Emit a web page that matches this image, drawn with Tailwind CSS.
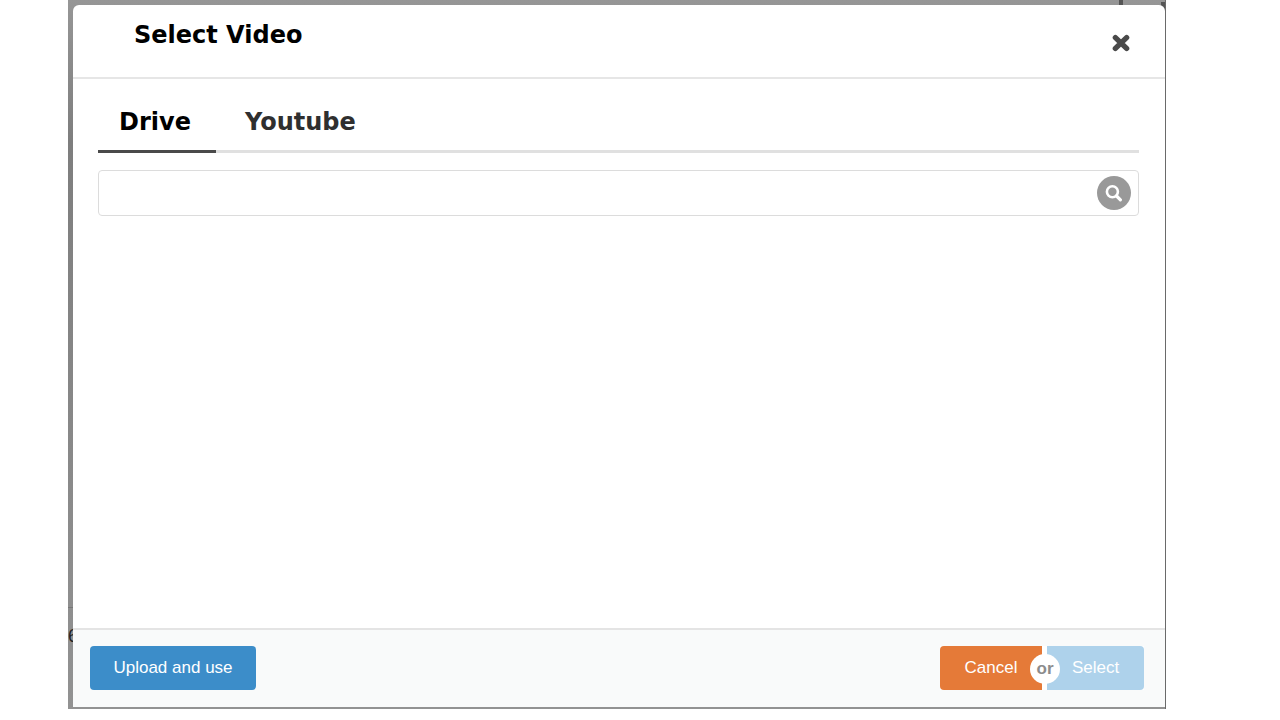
<!DOCTYPE html>
<html lang="en">
<head>
<meta charset="utf-8">
<meta name="viewport" content="width=device-width, initial-scale=1">
<title>Select Video</title>
<script src="https://cdn.jsdelivr.net/npm/@tailwindcss/browser@4"></script>
</head>
<body class="bg-white font-['Liberation_Sans',Arial,sans-serif]">
<div class="flex h-screen flex-col pr-[114px] pb-[11px] pl-[68px]">
  <!-- Dimmed page behind the dialog -->
  <div class="relative flex flex-1 flex-col overflow-hidden border-r border-[#6a6a6a] bg-linear-to-b from-[#969696] via-[#7e7e7e] via-20% to-[#929292] pt-[5px] pb-[2px] pl-[5px]">
    <span class="absolute top-0 right-[42px] h-[5px] w-1 bg-[#555]" aria-hidden="true"></span>
    <span class="absolute top-[2px] right-0 h-3 w-1 bg-[#555]" aria-hidden="true"></span>
    <span class="absolute bottom-[63px] left-0 text-lg leading-5 text-[#222]" aria-hidden="true">6</span>
    <span class="absolute bottom-[101px] left-0 h-px w-[5px] bg-[#777]" aria-hidden="true"></span>

    <main role="dialog" aria-labelledby="title" class="relative flex flex-1 flex-col overflow-hidden rounded-t-md bg-white">
      <header class="flex h-[74px] items-center justify-between border-b-2 border-[#e6e6e6] pr-[35px] pl-[61px]">
        <h1 id="title" class="pb-3 font-['DejaVu_Sans',sans-serif] text-2xl font-bold text-black">Select Video</h1>
        <button type="button" aria-label="Close" class="mt-1 block">
          <svg class="block size-[18px]" viewBox="0 0 18 18" fill="none" stroke="#4a4a4a" stroke-width="5.4" stroke-linecap="round" aria-hidden="true"><path d="M3.4 3.6 14.6 14.4M14.6 3.6 3.4 14.4"/></svg>
        </button>
      </header>

      <section class="flex-1 pt-3 pr-[26px] pl-[25px]">
        <div role="tablist" class="flex h-[62px] font-['DejaVu_Sans',sans-serif] text-2xl font-bold shadow-[inset_0_-3px_0_#e0e0e0]">
          <button type="button" role="tab" aria-selected="true" class="w-[118px] pr-1 text-black shadow-[inset_0_-3px_0_#4a4a4a]">Drive</button>
          <button type="button" role="tab" aria-selected="false" class="px-[29px] text-[#2f2f2f]">Youtube</button>
        </div>
        <form role="search" class="mt-[17px] flex h-[46px] items-center rounded border border-[#dcdcdc] bg-white pr-[7px]">
          <input type="search" aria-label="Search videos" class="h-full min-w-0 flex-1 px-3 text-lg outline-none">
          <button type="button" aria-label="Search" class="flex size-[34px] items-center justify-center rounded-full bg-[#999]">
            <svg class="size-[18px]" viewBox="0 0 18 18" fill="none" stroke="#fff" aria-hidden="true"><circle cx="7.4" cy="7.8" r="5.5" stroke-width="2.6"/><path d="m11.6 12 3.8 3.8" stroke-width="3.2" stroke-linecap="round"/></svg>
          </button>
        </form>
      </section>

      <footer class="flex h-[79px] items-center justify-between border-t-2 border-[#e4e4e4] bg-[#f9fafa] pr-[21px] pb-px pl-[17px] text-[17px] text-white">
        <button type="button" class="h-11 w-[166px] rounded bg-[#3c8dc9] pb-px">Upload and use</button>
        <div class="relative flex gap-[5px] bg-white">
          <button type="button" class="h-11 w-[102px] rounded-l bg-[#e57a38] pb-px">Cancel</button>
          <button type="button" class="h-11 w-[97px] rounded-r bg-[#aed2eb] pb-px">Select</button>
          <span class="absolute top-2 left-[90px] flex size-[30px] items-center justify-center rounded-full bg-white text-[17px] font-bold text-[#8c8c8c]">or</span>
        </div>
      </footer>
    </main>
  </div>
</div>
</body>
</html>
